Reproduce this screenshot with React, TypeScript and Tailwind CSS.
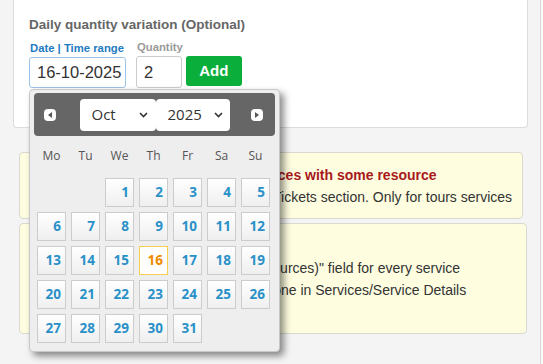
import React from 'react';

const weekDays = ['Mo', 'Tu', 'We', 'Th', 'Fr', 'Sa', 'Su'];

// October 2025 starts on a Wednesday
const days: (number | null)[] = [null, null, ...Array.from({ length: 31 }, (_, i) => i + 1)];

const Chevron = () => (
  <svg width="9" height="6" viewBox="0 0 9 6" className="shrink-0">
    <path d="M1 1l3.5 3.5L8 1" fill="none" stroke="#333" strokeWidth="1.6" />
  </svg>
);

const NavButton = ({ dir }: { dir: 'prev' | 'next' }) => (
  <div className="w-[12px] h-[12px] rounded-[4px] bg-white flex items-center justify-center">
    <svg width="4" height="6" viewBox="0 0 4 6">
      {dir === 'prev' ? <path d="M4 0L0 3l4 3z" fill="#555" /> : <path d="M0 0l4 3-4 3z" fill="#555" />}
    </svg>
  </div>
);

const DatePicker = () => (
  <div className="absolute left-[29px] top-[89px] w-[251px] bg-[#eeeeee] border border-[#c8c8c8] rounded-[4px] shadow-[4px_4px_7px_rgba(0,0,0,0.45)] px-[4px] pt-[3px] pb-[8px] font-['Open_Sans',sans-serif]">
    <div className="h-[43px] bg-[#666666] rounded-[4px] grid grid-cols-[1fr_auto_1fr] items-center">
      <div className="pl-[10px] flex">
        <NavButton dir="prev" />
      </div>
      <div className="flex">
        <div className="w-[76px] h-[32px] bg-white rounded-[4px] flex items-center justify-between pl-[12px] pr-[8px] text-[15px] text-[#333]">
          <span>Oct</span>
          <Chevron />
        </div>
        <div className="w-[74px] h-[32px] bg-white rounded-[4px] flex items-center justify-between pl-[12px] pr-[7px] text-[15px] text-[#333]">
          <span>2025</span>
          <Chevron />
        </div>
      </div>
      <div className="pr-[12px] flex justify-end">
        <NavButton dir="next" />
      </div>
    </div>

    <div className="px-[3px]">
      <div className="grid grid-cols-[repeat(7,29px)] gap-x-[5px] h-[40px] items-center">
        {weekDays.map(d => (
          <div key={d} className="text-center text-[12px] text-[#555]">
            {d}
          </div>
        ))}
      </div>
      <div className="mt-[2px] grid grid-cols-[repeat(7,29px)] gap-[5px]">
        {days.map((d, i) =>
          d === null ? (
            <div key={i} className="h-[29px]" />
          ) : d === 16 ? (
            <div
              key={i}
              className="h-[29px] border border-[#f5cd4f] bg-white flex items-center justify-end pr-[4px] text-[13.5px] font-bold text-[#f08a00]"
            >
              {d}
            </div>
          ) : (
            <div
              key={i}
              className="h-[29px] border border-[#cccccc] bg-linear-to-b from-white to-[#efefef] flex items-center justify-end pr-[4px] text-[13.5px] font-bold text-[#2a91c8]"
            >
              {d}
            </div>
          )
        )}
      </div>
    </div>
  </div>
);

export default function App() {
  return (
    <div className="relative h-[364px] overflow-hidden bg-[#f4f4f4] flex font-['Liberation_Sans',Arial,sans-serif] text-[#333]">
      <div className="w-[541px] shrink-0 border-r border-[#d6d6d6]">
        {/* Card */}
        <div className="ml-[13px] w-[515px] bg-white border border-t-0 border-[#dcdcdc] rounded-b-[4px] pl-[15px] pt-[16px] pb-[39px]">
          <h3 className="text-[13.5px] leading-[18px] font-bold text-[#666]">Daily quantity variation (Optional)</h3>
          <div className="mt-[6px] flex items-end">
            <div className="flex flex-col">
              <label className="pl-[1px] text-[11.3px] leading-[14px] font-bold text-[#1f7bc1]">Date | Time range</label>
              <div className="mt-[2px] w-[97px] h-[31px] border border-[#9cc4e8] rounded-[3px] bg-white flex items-center pl-[7px] text-[16.5px] text-[#333]">
                16-10-2025
              </div>
            </div>
            <div className="ml-[10px] flex flex-col">
              <label className="pl-[1px] text-[11.3px] leading-[14px] font-bold text-[#9a9a9a]">Quantity</label>
              <div className="mt-[2px] w-[46px] h-[32px] border border-[#cccccc] rounded-[3px] bg-white flex items-center pl-[7px] text-[16.5px] text-[#333]">
                2
              </div>
            </div>
            <button className="ml-[3px] mb-[2px] w-[56px] h-[30px] rounded-[3px] bg-[#0aae3b] text-white text-[15px] font-bold">
              Add
            </button>
          </div>
        </div>

        {/* Notices */}
        <div className="mt-[24px] ml-[19px] flex flex-col gap-[4px] text-[14px] leading-[22px]">
          <div className="w-[504px] bg-[#fefde0] border border-[#d9d9d0] rounded-[4px] pl-[12px] pt-[11px] pb-[10px]">
            <p className="font-bold text-[#a8191c]">Only if you want to link the tour services with some resource</p>
            <p>Resources can be configured from the Tickets section. Only for tours services</p>
          </div>
          <div className="w-[508px] bg-[#fefde0] border border-[#d9d9d0] rounded-[4px] pl-[12px] pt-[11px] pb-[32px]">
            <p className="font-bold">Note</p>
            <p>Don't forget to fill out the "Quantity (resources)" field for every service</p>
            <p>Quantities are set per service, as it is done in Services/Service Details</p>
          </div>
        </div>
      </div>
      <div className="flex-1 bg-[#fafafa]" />

      <DatePicker />
    </div>
  );
}
